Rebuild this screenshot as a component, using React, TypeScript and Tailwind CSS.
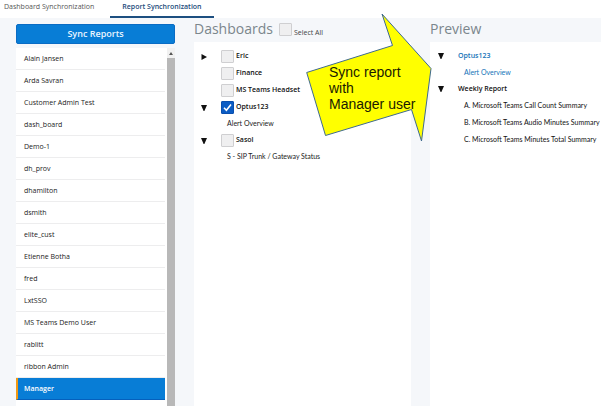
import clsx from "clsx";

const users = [
  "Alain Jansen",
  "Arda Savran",
  "Customer Admin Test",
  "dash_board",
  "Demo-1",
  "dh_prov",
  "dhamilton",
  "dsmith",
  "elite_cust",
  "Etienne Botha",
  "fred",
  "LxtSSO",
  "MS Teams Demo User",
  "rablitt",
  "ribbon Admin",
  "Manager",
];

const dashboards = [
  { name: "Eric", arrow: "right", checked: false, reports: [] },
  { name: "Finance", arrow: "", checked: false, reports: [] },
  { name: "MS Teams Headset", arrow: "", checked: false, reports: [] },
  { name: "Optus123", arrow: "down", checked: true, reports: ["Alert Overview"] },
  {
    name: "Sasol",
    arrow: "down",
    checked: false,
    reports: ["S - SIP Trunk / Gateway Status"],
  },
];

const preview = [
  { name: "Optus123", active: true, reports: ["Alert Overview"] },
  {
    name: "Weekly Report",
    active: false,
    reports: [
      "A. Microsoft Teams Call Count Summary",
      "B. Microsoft Teams Audio Minutes Summary",
      "C. Microsoft Teams Minutes Total Summary",
    ],
  },
];

function Arrow({ direction }: { direction: string }) {
  return (
    <svg viewBox="0 0 6 6" className="block size-1.5" aria-hidden="true">
      {direction === "right" ? (
        <path d="M0.5 0v6L6 3z" fill="#111" />
      ) : (
        <path d="M0 0h6L3.4 6h-0.8z" fill="#111" />
      )}
    </svg>
  );
}

function Checkbox({ id, checked = false }: { id: string; checked?: boolean }) {
  return (
    <span className="relative block size-[13px] shrink-0">
      <input
        id={id}
        type="checkbox"
        defaultChecked={checked}
        className="peer block size-full appearance-none rounded-[1px] border border-[#cfcfd1] bg-[#efeff0] checked:border-[#0a4fae] checked:bg-[#0b5cc4]"
      />
      <svg
        viewBox="0 0 13 13"
        className="pointer-events-none absolute inset-0 hidden peer-checked:block"
        aria-hidden="true"
      >
        <path d="M3 6.8l2.4 2.4L10 3.6" fill="none" stroke="#fff" strokeWidth="1.6" />
      </svg>
    </span>
  );
}

function Users() {
  return (
    <section className="flex min-w-0 flex-col pt-1.5">
      <button
        type="button"
        className="h-5 shrink-0 rounded-xs border border-[#0a6cc4] bg-[#087dd6] text-[9px] leading-4 font-semibold text-[#eaf5ff]"
      >
        Sync Reports
      </button>
      <div className="mt-1 flex flex-1 bg-white">
        <ul className="min-w-0 flex-1">
          {users.map((user) => (
            <li key={user}>
              <button
                type="button"
                className={clsx(
                  "block h-[22px] w-full truncate border-b pt-0.5 pr-2 text-left text-[7px]",
                  user === "Manager"
                    ? "border-b-[#0560bd] border-l-2 border-l-[#f39a12] bg-[#087dd6] pl-1.5 font-semibold text-white"
                    : "border-b-[#ededee] pl-2 text-[#222]"
                )}
              >
                {user}
              </button>
            </li>
          ))}
        </ul>
        <div className="ml-0.5 flex w-2 flex-col bg-[#b8b8b8]" aria-hidden="true">
          <div className="flex h-2.5 items-center justify-center bg-[#f1f1f1]">
            <svg viewBox="0 0 4 3" className="w-1">
              <path d="M0 3h4L2 0z" fill="#555" />
            </svg>
          </div>
        </div>
      </div>
    </section>
  );
}

function Dashboards() {
  return (
    <section className="flex min-w-0 flex-col">
      <header className="flex h-6 shrink-0 items-center pb-0.5">
        <h2 className="text-[14px] leading-5 text-[#7b868c]">Dashboards</h2>
        <div className="ml-1.5 flex items-center gap-0.5">
          <Checkbox id="select-all" />
          <label htmlFor="select-all" className="pt-2 text-[7px] text-[#444]">
            Select All
          </label>
        </div>
      </header>
      <ul className="flex-1 bg-white pt-1.5 pl-[7px]">
        {dashboards.map((item) => (
          <li key={item.name}>
            <div className="flex h-[17px] items-center">
              <span className="w-5">
                {item.arrow && <Arrow direction={item.arrow} />}
              </span>
              <Checkbox id={item.name} checked={item.checked} />
              <label
                htmlFor={item.name}
                className="ml-0.5 text-[7px] font-semibold text-[#111]"
              >
                {item.name}
              </label>
            </div>
            {item.reports.map((report) => (
              <p
                key={report}
                className="h-4 pl-[26px] font-[Lato,sans-serif] text-[7px] leading-[14px] text-[#222]"
              >
                {report}
              </p>
            ))}
          </li>
        ))}
      </ul>
    </section>
  );
}

function Preview() {
  return (
    <section className="flex min-w-0 flex-col">
      <h2 className="h-6 shrink-0 text-[14px] leading-[22px] text-[#7b868c]">Preview</h2>
      <ul className="flex-1 bg-white pt-1.5 pl-2">
        {preview.map((item) => (
          <li key={item.name} className={item.active ? "text-[#1473b8]" : "text-[#111]"}>
            <div className="flex h-4 items-center text-[7px] font-semibold">
              <span className="w-5">
                <Arrow direction="down" />
              </span>
              {item.name}
            </div>
            {item.reports.map((report) => (
              <p
                key={report}
                className="h-[17px] pl-[26px] font-[Lato,sans-serif] text-[7px] leading-4 whitespace-nowrap"
              >
                {report}
              </p>
            ))}
          </li>
        ))}
      </ul>
    </section>
  );
}

// Arrow annotation that floats over the dashboards and points at the preview
function Callout() {
  return (
    <div className="absolute top-[13px] left-[306px] h-[130px] w-[126px]">
      <svg viewBox="0 0 126 130" className="absolute inset-0" aria-hidden="true">
        <path
          d="M76 1L86.500 32.500L0.700 59.500L19.500 122.500L105.500 96.500L115.500 128L125 55.500z"
          fill="#ff0"
          stroke="#3f6a8f"
        />
      </svg>
      <p className="relative pt-[51px] pl-[23px] font-['Liberation_Sans',Arial,sans-serif] text-[14px] leading-4 whitespace-nowrap text-[#1a1a00]">
        Sync report
        <br />
        with
        <br />
        Manager user
      </p>
    </div>
  );
}

export default function App() {
  return (
    <div className="relative flex min-h-screen flex-col overflow-hidden bg-[#f5f7fa] font-['Open_Sans','Noto_Sans',sans-serif]">
      <nav className="flex h-[18px] shrink-0 bg-white text-[7px]">
        <a href="#dashboard" className="pr-4 pl-1 leading-[14px] text-[#555]">
          Dashboard Synchronization
        </a>
        <a
          href="#report"
          className="border-b-2 border-[#1d4f80] px-3 leading-[14px] font-semibold text-[#1b4a7a]"
        >
          Report Synchronization
        </a>
      </nav>
      <main className="grid flex-1 grid-cols-[159fr_217fr_171fr] gap-x-[19px] pl-4">
        <Users />
        <Dashboards />
        <Preview />
      </main>
      <Callout />
    </div>
  );
}
